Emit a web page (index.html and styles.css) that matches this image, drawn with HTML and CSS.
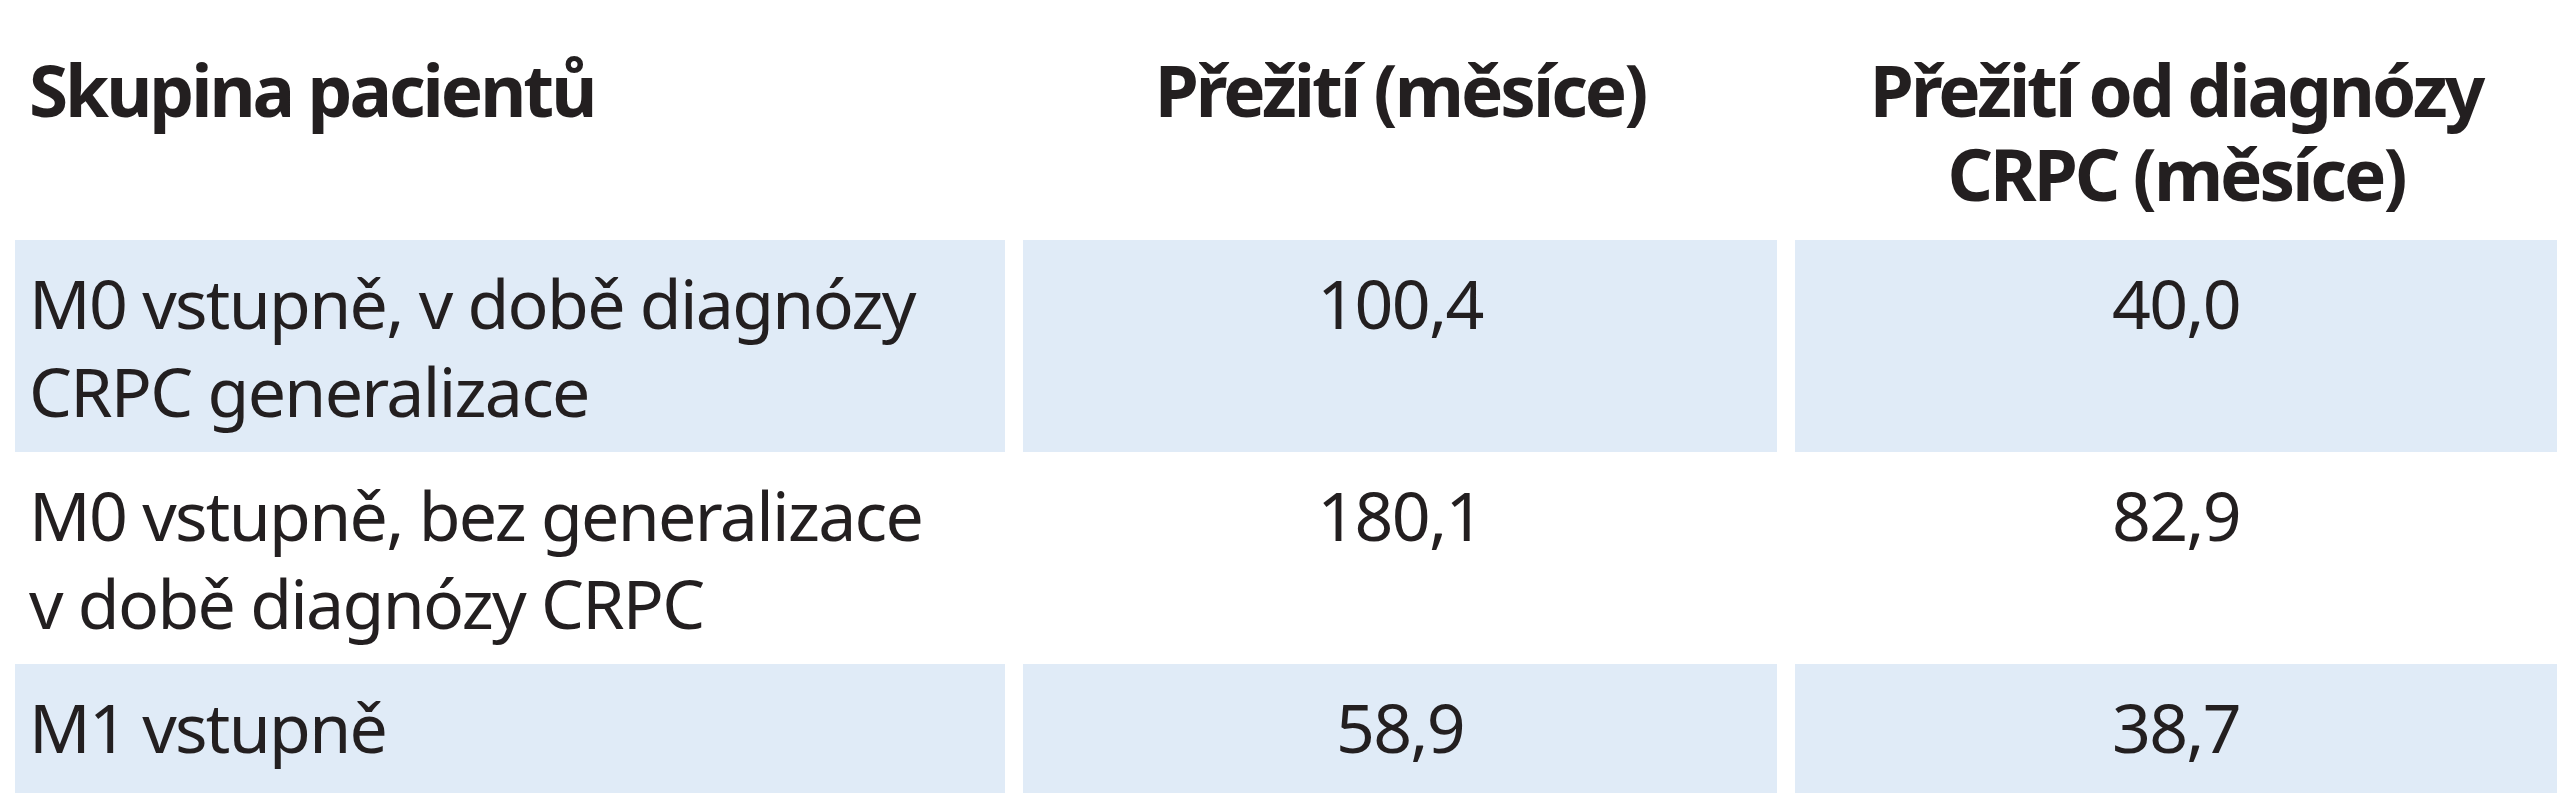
FILE: index.html
```html
<!DOCTYPE html>
<html lang="cs">
<head>
<meta charset="utf-8">
<title>Přežití pacientů</title>
<link rel="stylesheet" href="styles.css">
</head>
<body>
<div class="table">
  <div class="cell head left">Skupina pacientů</div>
  <div class="cell head center">Přežití (měsíce)</div>
  <div class="cell head center">Přežití od diagnózy<br>CRPC (měsíce)</div>

  <div class="cell body left shaded">M0 vstupně, v době diagnózy<br>CRPC generalizace</div>
  <div class="cell body center shaded">100,4</div>
  <div class="cell body center shaded">40,0</div>

  <div class="cell body left">M0 vstupně, bez generalizace<br>v době diagnózy CRPC</div>
  <div class="cell body center">180,1</div>
  <div class="cell body center">82,9</div>

  <div class="cell body left shaded last">M1 vstupně</div>
  <div class="cell body center shaded last">58,9</div>
  <div class="cell body center shaded last">38,7</div>
</div>
</body>
</html>
```
FILE: styles.css
```css
html, body {
  margin: 0;
  padding: 0;
  background: #ffffff;
}

body {
  font-family: "Noto Sans", "Open Sans", sans-serif;
  font-stretch: semi-condensed;
  color: #231f20;
}

.table {
  display: grid;
  grid-template-columns: 990px 754px 762px;
  column-gap: 18px;
  padding-left: 15px;
}

.cell {
  padding-left: 14px;
  padding-right: 14px;
}

.head {
  font-weight: 700;
  font-size: 71px;
  line-height: 84px;
  letter-spacing: -3px;
  padding-top: 48px;
  padding-bottom: 24px;
}

.body {
  font-weight: 400;
  font-size: 68px;
  line-height: 88px;
  letter-spacing: -1.7px;
  padding-top: 19px;
  padding-bottom: 17px;
}

.body.last {
  padding-bottom: 22px;
}

.left {
  text-align: left;
}

.center {
  text-align: center;
}

.shaded {
  background: #e0ebf7;
}
```
